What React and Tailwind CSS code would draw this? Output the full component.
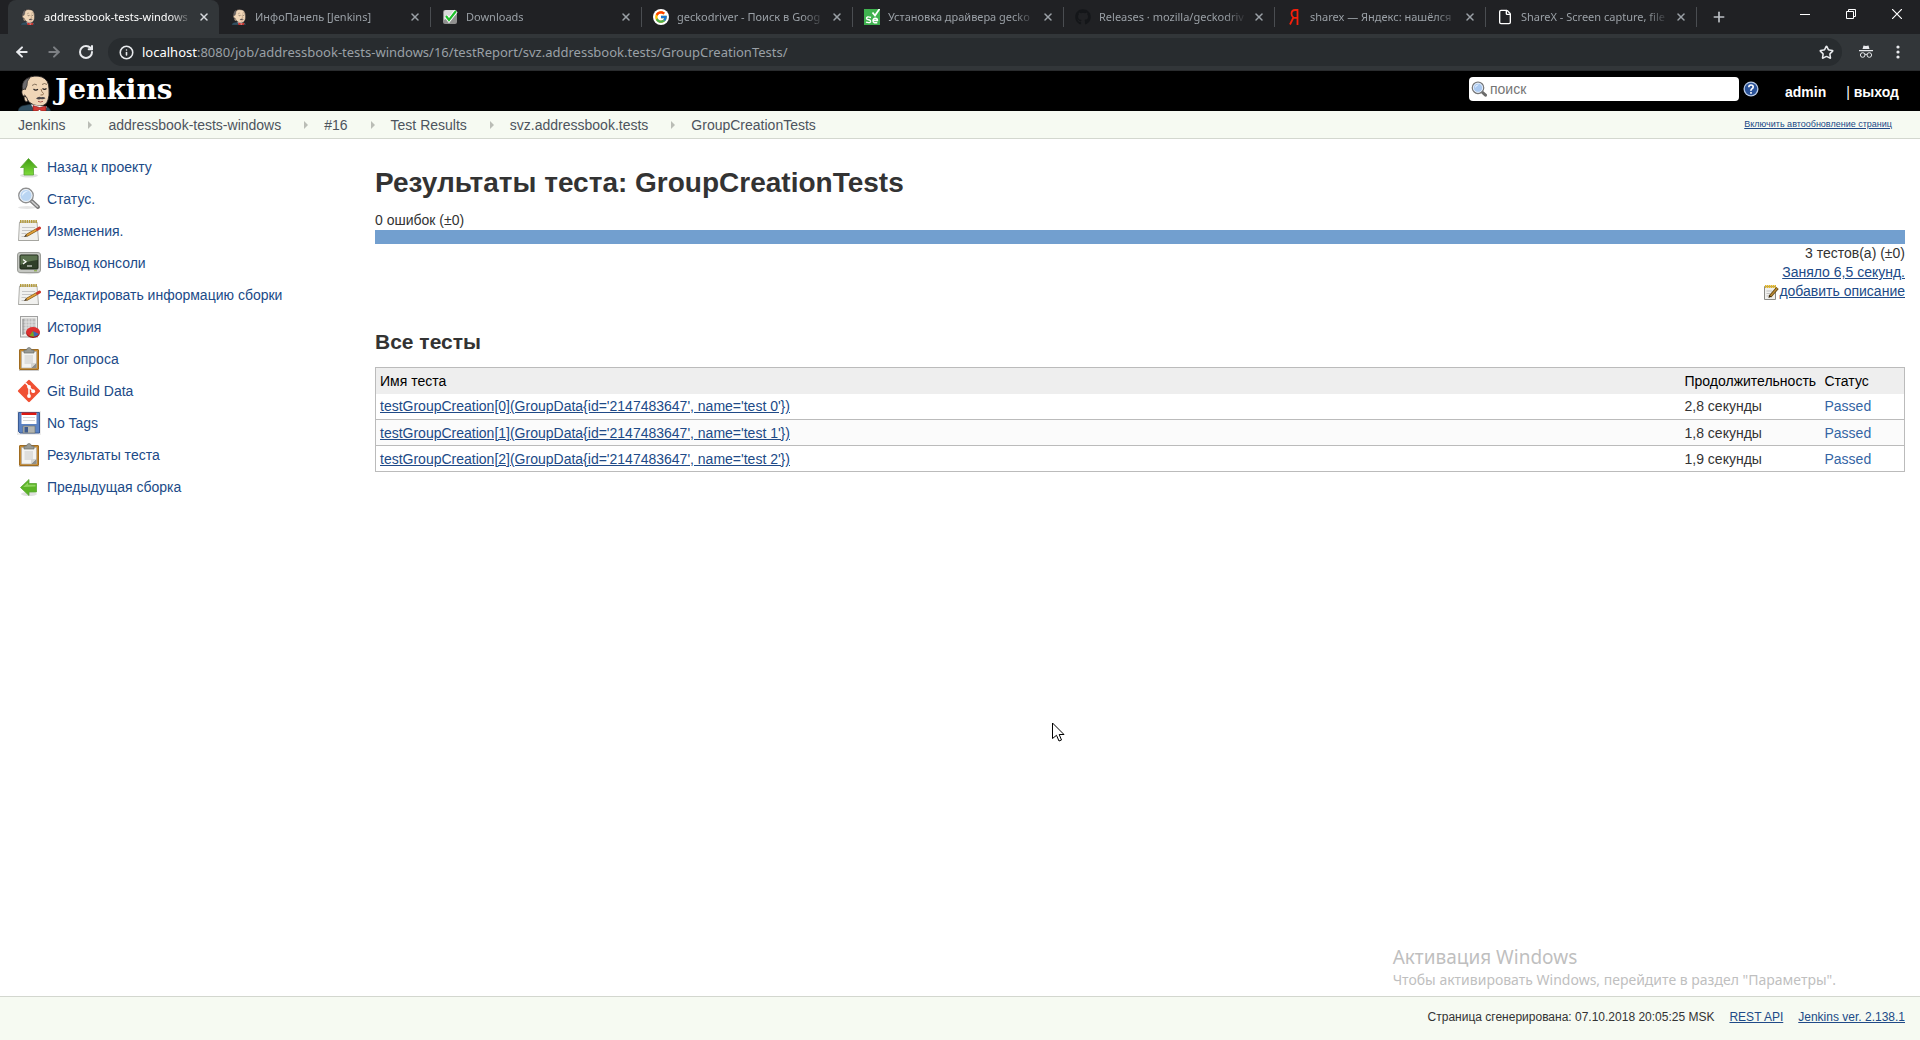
import React from "react";
import { ArrowLeft, ArrowRight, RotateCw, Info, Star, File, X, Plus } from "lucide-react";
import { FaGithub } from "react-icons/fa";
import { FcGoogle } from "react-icons/fc";

const Butler = ({ className }) => (
  <svg viewBox="0 0 33 36" className={className} aria-hidden="true">
    <path d="M0 36Q1 31 6 30.500L14 29L26 31Q32 32 32.500 36Z" fill="#335061" stroke="#1b2a33" strokeWidth=".6" />
    <path d="M5 17Q3 7 9 3.500Q16-.5 24 2Q31 5 31 14Q31.500 21 30 25Q28 31 22 31Q15 31 11 27L9 24Z" fill="#f0d6b7" stroke="#231f20" strokeWidth=".9" />
    <path d="M4.500 15Q3 7 9 3.500L12 2.500Q8.500 6 9 10.500L7.500 14Z" fill="#6d6b6d" stroke="#231f20" strokeWidth=".7" />
    <path d="M8 14.500Q4 13.500 3.800 17Q4 22 8.500 22L10 26L8 27Q6 25 6 22" fill="#f0d6b7" stroke="#231f20" strokeWidth=".7" />
    <path d="M14 10.500q3-2.500 5-.5M24 9.500q2.500-2 5 0" fill="none" stroke="#6b5844" strokeWidth=".8" />
    <path d="M15.500 14q2 2 4.500.3M24.500 13.500q2 1.800 4 0" fill="none" stroke="#231f20" strokeWidth="1.100" />
    <path d="M23 14q.5 3 2.500 4.500q0 2-3 1.500" fill="none" stroke="#8a6a4a" strokeWidth=".9" />
    <path d="M18 23.500q2.500-2.500 5-1.300q3-.8 4.500 1q-2 1.500-4.500.9q-2.500 1-5-.6Z" fill="#4b4547" />
    <path d="M20 26.300q2.500 1.500 5 0" fill="none" stroke="#a3433e" strokeWidth=".9" />
    <path d="M13 29.500l4 6.500h9l3-4.500l-6-.5z" fill="#fff" />
    <path d="M15 30.500l6.500 2l6.500-1.500v5h-4.500l-2-1.500l-2 1.500H15Z" fill="#d33833" stroke="#7a1512" strokeWidth=".6" />
  </svg>
);

const Downloads = () => (
  <svg viewBox="0 0 16 16" className="size-4" aria-hidden="true">
    <rect x="1" y="1" width="14" height="14" rx="2" fill="#8f8f8f" />
    <path d="M2 3Q2 1 4 1H12Q14 1 14 3V6Q8 7 2 11Z" fill="#d8d8d8" />
    <path d="M4 7l3 4L14 2" fill="none" stroke="#fff" strokeWidth="4" />
    <path d="M4 7l3 4L14 2" fill="none" stroke="#1fbf2b" strokeWidth="2.2" />
  </svg>
);

const Selenium = () => (
  <svg viewBox="0 0 16 16" className="size-4" aria-hidden="true">
    <rect width="16" height="16" fill="#3fb24f" />
    <path d="M8.500 3.500l2.500 3L15.500 0" fill="none" stroke="#fff" strokeWidth="1.800" />
    <path d="M7 8.500Q2.500 7 2.500 9.300Q2.500 10.500 4.500 10.800Q7 11.200 6.500 12.800Q5.500 14.300 2 13.200M9 11.500H13.500Q13.500 9.300 11.300 9.300Q9 9.500 9 11.800Q9 14.500 13.300 13.500" fill="none" stroke="#fff" strokeWidth="1.400" />
  </svg>
);

const Yandex = () => (
  <svg viewBox="0 0 16 16" className="size-4" aria-hidden="true">
    <path d="M12 1H9.200Q5.500 1 5.500 4.800Q5.500 7.300 7.400 8.500L4 15.500M11.500 0V16M7.400 8.800H12" fill="none" stroke="#f4200c" strokeWidth="1.800" />
  </svg>
);

const UpArrow = () => (
  <svg viewBox="0 0 24 24" className="size-6" aria-hidden="true">
    <defs>
      <linearGradient id="green" x1="0" y1="0" x2="0" y2="1">
        <stop offset="0" stopColor="#3f9b12" />
        <stop offset="1" stopColor="#7fdb3c" />
      </linearGradient>
    </defs>
    <ellipse cx="12" cy="20.500" rx="9" ry="2" fill="#000" opacity=".12" />
    <path d="M11.500 3.500L20 12.500H16.500V20H7V12.500H3.500Z" fill="url(#green)" stroke="#5aa636" strokeWidth=".8" />
  </svg>
);

const LeftArrow = () => (
  <svg viewBox="0 0 24 24" className="size-6" aria-hidden="true">
    <ellipse cx="12" cy="19" rx="8" ry="2" fill="#000" opacity=".12" />
    <path d="M3.500 12.500L12 4.500V8.500H19.500V17H12V20.500Z" fill="#5cb526" stroke="#5aa636" strokeWidth=".8" />
    <path d="M6 12L11 7.500V9.800H18.500V11.500Z" fill="#8fd35f" />
  </svg>
);

const Magnifier = ({ className = "size-6" }) => (
  <svg viewBox="0 0 24 24" className={className} aria-hidden="true">
    <ellipse cx="10" cy="20.500" rx="9" ry="1.500" fill="#000" opacity=".1" />
    <path d="M14 13.500L21 20" stroke="#7c7c7c" strokeWidth="4" strokeLinecap="round" />
    <path d="M15 14.500L20.500 19.500" stroke="#cfcfcf" strokeWidth="1.600" strokeLinecap="round" />
    <circle cx="9" cy="8.500" r="7.200" fill="#b9d5f2" stroke="#909090" strokeWidth="1.400" />
    <circle cx="9" cy="8.500" r="6" fill="#b9d5f2" stroke="#f4f4f4" strokeWidth="1" />
    <path d="M5 9q0-5 6-5q-3 1-6 5Z" fill="#e8f3ff" />
  </svg>
);

const SearchGlass = () => (
  <svg viewBox="0 0 16 16" className="size-4" aria-hidden="true">
    <path d="M10.500 10.500L14.500 14.200" stroke="#6b6b6b" strokeWidth="3" strokeLinecap="round" />
    <circle cx="7" cy="6.800" r="5.700" fill="#a9c8f0" stroke="#777" strokeWidth="1.300" />
    <circle cx="7" cy="6.800" r="4.600" fill="none" stroke="#eef4fb" strokeWidth=".9" />
    <path d="M4 7q0-3.500 4-3.500q-2 1-4 3.500Z" fill="#e8f3ff" />
  </svg>
);

const Notepad = ({ className = "size-6" }) => (
  <svg viewBox="0 0 24 24" className={className} aria-hidden="true">
    <path d="M2.500 3H20L21.500 21.500H1.500Z" fill="#f1f1ef" stroke="#b0b0ac" />
    <path d="M1.500 21.500H22" stroke="#a5a5a0" />
    <path d="M3 2.500H20" stroke="#b39a3c" strokeWidth="3" strokeDasharray="1.500 .7" />
    <path d="M5 8.500H18M5 11.500H15M4.500 14.500H9M4.500 17.500H8" stroke="#c6c6c6" />
    <path d="M9.500 16.500L20 10.500" stroke="#7a5416" strokeWidth="3" />
    <path d="M10 16.200L19.500 10.800" stroke="#e0a03c" strokeWidth="1.800" />
    <path d="M7 18l1.800-2.500l1.400 2Z" fill="#463010" />
    <path d="M20.500 10.200L22.500 9" stroke="#cc3b2e" strokeWidth="3" strokeLinecap="round" />
  </svg>
);

const NotepadSmall = () => (
  <svg viewBox="0 0 16 16" className="size-4" aria-hidden="true">
    <path d="M1.500 2.500H12.500V15.500H1.500Z" fill="#f0f0ee" stroke="#8a8a86" />
    <path d="M2 2.500H13" stroke="#e0b62c" strokeWidth="3" strokeDasharray="1.500 .5" />
    <path d="M3.500 7H9M3.500 9.500H7M3.500 12H6" stroke="#c0c0c0" />
    <path d="M7 12.500L14.500 4" stroke="#5f4312" strokeWidth="3.200" />
    <path d="M7.500 12L14.300 4.300" stroke="#b98a35" strokeWidth="1.500" />
    <path d="M5.500 14l.6-3l2.200 1.800Z" fill="#3b290a" />
  </svg>
);

const Terminal = () => (
  <svg viewBox="0 0 24 24" className="size-6" aria-hidden="true">
    <ellipse cx="12" cy="22" rx="10" ry="1.200" fill="#000" opacity=".15" />
    <rect x=".5" y="1.500" width="23" height="20" rx="2.500" fill="#c5c7c2" stroke="#9a9c97" />
    <rect x="3" y="4" width="18" height="14" rx="1" fill="#2f3f29" stroke="#1c2618" />
    <path d="M3.500 4.500H20.500V9Q10 10 3.500 14Z" fill="#5c7350" />
    <path d="M6 8.500l3 2.200l-3 2.200M10 15h5" fill="none" stroke="#fff" strokeWidth="1.200" />
    <path d="M17 19.800h3" stroke="#7da62f" />
  </svg>
);

const History = () => (
  <svg viewBox="0 0 24 24" className="size-6" aria-hidden="true">
    <rect x="3.500" y="1.500" width="17" height="20.500" fill="#f0f0ee" stroke="#a0a0a0" />
    <rect x="5.500" y="3.500" width="13" height="15.500" fill="#bcbcbc" />
    <path d="M5 7H19M5 10H19M5 13H19M5 16H19M9 3.500V20M12 3.500V20M15 3.500V20" stroke="#e9e9e9" strokeWidth=".8" />
    <path d="M6 4V20" stroke="#8a8a8a" />
    <ellipse cx="16" cy="18" rx="6.800" ry="5" fill="#a01414" />
    <ellipse cx="16" cy="16.800" rx="6.800" ry="4.800" fill="#dd3030" />
    <path d="M16 16L22 19Q19 22 16.500 21.500Z" fill="#3f68b0" />
    <path d="M16 16L17 21.500Q14.500 21.700 12.500 20.700Z" fill="#79a81f" />
  </svg>
);

const Clipboard = () => (
  <svg viewBox="0 0 24 24" className="size-6" aria-hidden="true">
    <path d="M2 23.500H22" stroke="#000" opacity=".2" />
    <rect x="2.500" y="2.500" width="19" height="20" rx=".5" fill="#c68a30" stroke="#a06c20" />
    <path d="M4.500 4.500H19.500V21H4.500Z" fill="#f3f3f1" stroke="#aaa" strokeWidth=".6" />
    <path d="M7.500 8H16V17H7.500Z" fill="#dededc" />
    <path d="M14 21L19.500 15.500V21Z" fill="#8e8e8a" />
    <path d="M14 21V16H19.500Z" fill="#d5d5d2" />
    <path d="M7 6V3H9.500Q10 .5 12 .5T14.500 3H17V6Z" fill="#999b96" stroke="#6c6e69" strokeWidth=".7" />
  </svg>
);

const Git = () => (
  <svg viewBox="0 0 24 24" className="size-6" aria-hidden="true">
    <rect x="3.800" y="3.800" width="16.400" height="16.400" rx="1.200" transform="rotate(45 12 12)" fill="#f05033" />
    <path d="M8.500 4L12 7.500V17M12 8L16 12" fill="none" stroke="#fff" strokeWidth="1.500" />
    <circle cx="12" cy="7.800" r="1.900" fill="#fff" />
    <circle cx="12" cy="17" r="1.900" fill="#fff" />
    <circle cx="16.200" cy="12.200" r="1.900" fill="#fff" />
  </svg>
);

const Floppy = () => (
  <svg viewBox="0 0 24 24" className="size-6" aria-hidden="true">
    <rect width="24" height="24" fill="#ececec" />
    <path d="M1.500 1.500H22.500V22H3L1.500 20.500Z" fill="#5b83c4" stroke="#3a5a93" />
    <rect x="4.500" y="2" width="15" height="11" fill="#fff" />
    <rect x="4.500" y="1.500" width="15" height="2.500" fill="#dd1a12" />
    <path d="M6 6.500H18M6 9.500H18" stroke="#d6d6d6" />
    <rect x="6" y="15" width="12" height="7" fill="#b3b5b0" stroke="#6c6e69" strokeWidth=".6" />
    <rect x="7.500" y="16" width="3.500" height="5.500" fill="#3d5a8c" />
  </svg>
);

const Cursor = () => (
  <svg viewBox="0 0 14 20" className="h-5 w-3.5" aria-hidden="true">
    <path d="M.5 1V16.500L4.500 13.300L7 19L9.500 18L7.200 12.500H12Z" fill="#fff" stroke="#000" />
  </svg>
);

const tabs = [
  { title: "addressbook-tests-windows", icon: <Butler className="size-4" />, active: true },
  { title: "ИнфоПанель [Jenkins]", icon: <Butler className="size-4" /> },
  { title: "Downloads", icon: <Downloads />, line: true },
  { title: "geckodriver - Поиск в Goog", icon: <span className="flex size-4 items-center justify-center rounded-full bg-white"><FcGoogle className="size-3.5" /></span>, line: true },
  { title: "Установка драйвера gecko", icon: <Selenium />, line: true },
  { title: "Releases · mozilla/geckodriv", icon: <FaGithub className="size-4 text-[#141619]" />, line: true },
  { title: "sharex — Яндекс: нашёлся", icon: <Yandex />, line: true },
  { title: "ShareX - Screen capture, file", icon: <File className="size-4 text-white" strokeWidth={2} />, line: true },
];

const crumbs = ["Jenkins", "addressbook-tests-windows", "#16", "Test Results", "svz.addressbook.tests", "GroupCreationTests"];

const tasks = [
  ["Назад к проекту", UpArrow],
  ["Статус.", Magnifier],
  ["Изменения.", Notepad],
  ["Вывод консоли", Terminal],
  ["Редактировать информацию сборки", Notepad],
  ["История", History],
  ["Лог опроса", Clipboard],
  ["Git Build Data", Git],
  ["No Tags", Floppy],
  ["Результаты теста", Clipboard],
  ["Предыдущая сборка", LeftArrow],
];

const tests = [
  ["testGroupCreation[0](GroupData{id='2147483647', name='test 0'})", "2,8 секунды"],
  ["testGroupCreation[1](GroupData{id='2147483647', name='test 1'})", "1,8 секунды"],
  ["testGroupCreation[2](GroupData{id='2147483647', name='test 2'})", "1,9 секунды"],
];

function Tab({ title, icon, active, line }) {
  return (
    <div className={active ? "flex w-[211px] min-w-0 items-center rounded-t-lg bg-[#323639] text-white" : "flex w-[211px] min-w-0 items-center text-[#9aa0a6]"}>
      <span className={line ? "h-5 w-px bg-[#4a4d51]" : "h-5 w-px"} />
      <button className="flex min-w-0 flex-1 items-center gap-2 pl-[11px] text-left">
        <span className="shrink-0">{icon}</span>
        <span className="flex-1 overflow-hidden whitespace-nowrap [mask-image:linear-gradient(to_right,black_85%,transparent)]">{title}</span>
      </button>
      <button aria-label="Закрыть вкладку" className={active ? "mr-[7px] ml-1 flex size-4 shrink-0 items-center justify-center text-[#d5d8dc]" : "mr-[7px] ml-1 flex size-4 shrink-0 items-center justify-center"}>
        <X className="size-3" strokeWidth={3} />
      </button>
    </div>
  );
}

function Browser() {
  return (
    <div className="bg-[#202124] font-['Noto_Sans',sans-serif] text-[11px]">
      <div className="flex h-[34px]">
        <div className="flex min-w-0 flex-1 pl-2">
          {tabs.map((t) => <Tab key={t.title} {...t} />)}
          <div className="flex items-center gap-3.5">
            <span className="h-5 w-px bg-[#4a4d51]" />
            <button aria-label="Новая вкладка" className="text-[#bdc1c6]"><Plus className="size-4" strokeWidth={2.5} /></button>
          </div>
        </div>
        <div className="flex pb-1.5 text-white">
          <button aria-label="Свернуть" className="flex w-[46px] items-center justify-center">
            <svg viewBox="0 0 10 10" className="size-2.5" aria-hidden="true"><path d="M0 5.500H10" stroke="currentColor" /></svg>
          </button>
          <button aria-label="Восстановить" className="flex w-[46px] items-center justify-center">
            <svg viewBox="0 0 10 10" className="size-2.5" aria-hidden="true"><path d="M.5 2.500H7.500V9.500H.5ZM2.500 2.500V.5H9.500V7.500H7.500" fill="none" stroke="currentColor" /></svg>
          </button>
          <button aria-label="Закрыть" className="flex w-[46px] items-center justify-center">
            <svg viewBox="0 0 10 10" className="size-2.5" aria-hidden="true"><path d="M0 0L10 10M10 0L0 10" stroke="currentColor" strokeWidth="1.200" /></svg>
          </button>
        </div>
      </div>
      <div className="flex h-[37px] items-center border-b border-[#2a2c2e] bg-[#323639] text-[#e8eaed]">
        <div className="flex w-[108px] items-center gap-4 pl-3.5">
          <button aria-label="Назад"><ArrowLeft className="size-4" strokeWidth={3} /></button>
          <button aria-label="Вперёд" className="text-[#7d8084]"><ArrowRight className="size-4" strokeWidth={3} /></button>
          <button aria-label="Обновить"><RotateCw className="size-4" strokeWidth={3} /></button>
        </div>
        <div className="flex h-7 flex-1 items-center gap-2 rounded-full bg-[#282c2f] pr-2 pl-[11px]">
          <Info className="size-[15px] text-[#e8eaed]" strokeWidth={2.5} />
          <div className="flex-1 text-[13px] text-[#9aa0a6]">
            <span className="text-white">localhost</span>:8080/job/addressbook-tests-windows/16/testReport/svz.addressbook.tests/GroupCreationTests/
          </div>
          <button aria-label="Добавить в закладки"><Star className="size-[15px]" strokeWidth={2.5} /></button>
        </div>
        <div className="flex items-center gap-4 pr-3.5 pl-4">
          <svg viewBox="0 0 16 16" className="size-4" aria-hidden="true">
            <path d="M4.500 5L5.500 1.500L8 2L10.500 1.500L11.500 5ZM1 6H15V7.200H1Z" fill="#e8eaed" />
            <circle cx="4.700" cy="11" r="2.300" fill="none" stroke="#e8eaed" />
            <circle cx="11.300" cy="11" r="2.300" fill="none" stroke="#e8eaed" />
            <path d="M7 10.500q1-.8 2 0" fill="none" stroke="#e8eaed" />
          </svg>
          <button aria-label="Меню">
            <svg viewBox="0 0 16 16" className="size-4" aria-hidden="true">
              <circle cx="8" cy="3" r="1.600" fill="#e8eaed" /><circle cx="8" cy="8" r="1.600" fill="#e8eaed" /><circle cx="8" cy="13" r="1.600" fill="#e8eaed" />
            </svg>
          </button>
        </div>
      </div>
    </div>
  );
}

export default function App() {
  return (
    <div className="relative flex min-h-screen flex-col bg-white font-['Liberation_Sans',Arial,sans-serif] text-sm text-[#333]">
      <Browser />
      <header className="flex h-10 items-center bg-black pr-[21px] pl-[18px] text-white">
        <a href="#" className="flex flex-1 items-end self-stretch">
          <Butler className="h-9 w-[33px]" />
          <span className="pl-1 font-['DejaVu_Serif',serif] text-[28px] leading-[42px] font-bold">Jenkins</span>
        </a>
        <div className="mb-1 flex items-center gap-1">
          <label className="flex h-6 w-[270px] items-center gap-[3px] rounded-sm bg-white pl-0.5">
            <SearchGlass />
            <input type="text" aria-label="поиск" placeholder="поиск" className="min-w-0 flex-1 outline-none placeholder:text-[#757575]" />
          </label>
          <a href="#" aria-label="Справка">
            <svg viewBox="0 0 16 16" className="size-4" aria-hidden="true">
              <circle cx="8" cy="8" r="7.500" fill="#b8c9e4" />
              <circle cx="8" cy="8" r="6.200" fill="#2a5298" />
              <path d="M5.800 6.300q0-2.300 2.200-2.300t2.200 2q0 1.200-1.200 1.800T8 9.800M8 11v1.700" fill="none" stroke="#fff" strokeWidth="1.600" />
            </svg>
          </a>
        </div>
        <div className="mt-0.5 flex gap-5 pl-[26px] font-bold">
          <a href="#">admin</a>
          <span><span className="font-normal">| </span><a href="#">выход</a></span>
        </div>
      </header>
      <nav className="flex h-7 items-center border-b border-[#d3d7cf] bg-[#f6faf2] pr-7 pl-[18px] text-[#4d545d]">
        <ol className="flex flex-1 items-center">
          {crumbs.map((c, i) => (
            <li key={c} className="flex items-center">
              {i > 0 && (
                <svg viewBox="0 0 4 8" className="mr-4 ml-[23px] h-2 w-1" aria-hidden="true"><path d="M0 0L4 4L0 8Z" fill="#babdb6" /></svg>
              )}
              <a href="#">{c}</a>
            </li>
          ))}
        </ol>
        <a href="#" className="text-[9px] text-[#204a87] underline">Включить автообновление страниц</a>
      </nav>
      <div className="flex flex-1 pr-[15px]">
        <aside className="w-[375px] shrink-0 pt-3 pl-[17px]">
          {tasks.map(([label, Icon]) => (
            <a key={label} href="#" className="flex h-8 items-center gap-1.5 text-[#204a87]">
              <Icon />
              {label}
            </a>
          ))}
        </aside>
        <main className="min-w-0 flex-1 pt-6">
          <h1 className="text-[28px] leading-10 font-bold">Результаты теста: GroupCreationTests</h1>
          <div className="pt-[7px] leading-5">0 ошибок (±0)</div>
          <div className="h-3.5 bg-[#729fcf]" />
          <div className="text-right leading-[19px]">
            <div>3 тестов(а) (±0)</div>
            <div><a href="#" className="text-[#204a87] underline">Заняло 6,5 секунд.</a></div>
            <a href="#" className="flex items-center justify-end text-[#204a87] underline"><NotepadSmall />добавить описание</a>
          </div>
          <h2 className="pt-7 text-[21px] leading-[26px] font-bold">Все тесты</h2>
          <table className="mt-3 w-full border-collapse border border-[#bbb]">
            <thead>
              <tr className="h-[26px] bg-[#eee] text-left text-black">
                <th className="px-1 font-normal">Имя теста</th>
                <th className="w-[140px] px-1 font-normal">Продолжительность</th>
                <th className="w-[84px] px-1 font-normal">Статус</th>
              </tr>
            </thead>
            <tbody>
              {tests.map(([name, time]) => (
                <tr key={name} className="h-[26px] border-b border-[#bbb] even:bg-[#fbfbfb]">
                  <td className="px-1"><a href="#" className="text-[#204a87] underline">{name}</a></td>
                  <td className="px-1">{time}</td>
                  <td className="px-1 text-[#3465a4]">Passed</td>
                </tr>
              ))}
            </tbody>
          </table>
        </main>
      </div>
      <footer className="flex h-11 items-center justify-end gap-[15px] border-t border-[#d3d7cf] bg-[#f6faf2] pr-[15px] pb-1 text-xs">
        <span>Страница сгенерирована: 07.10.2018 20:05:25 MSK</span>
        <a href="#" className="text-[#204a87] underline">REST API</a>
        <a href="#" className="text-[#204a87] underline">Jenkins ver. 2.138.1</a>
      </footer>
      <div className="pointer-events-none absolute right-[84px] bottom-[49px] font-['Noto_Sans',sans-serif] text-[#bfbfbf]">
        <div className="text-[19px] leading-6">Активация Windows</div>
        <div className="text-sm leading-[22px]">Чтобы активировать Windows, перейдите в раздел "Параметры".</div>
      </div>
      <div className="pointer-events-none absolute top-[722px] left-[1052px]"><Cursor /></div>
    </div>
  );
}
